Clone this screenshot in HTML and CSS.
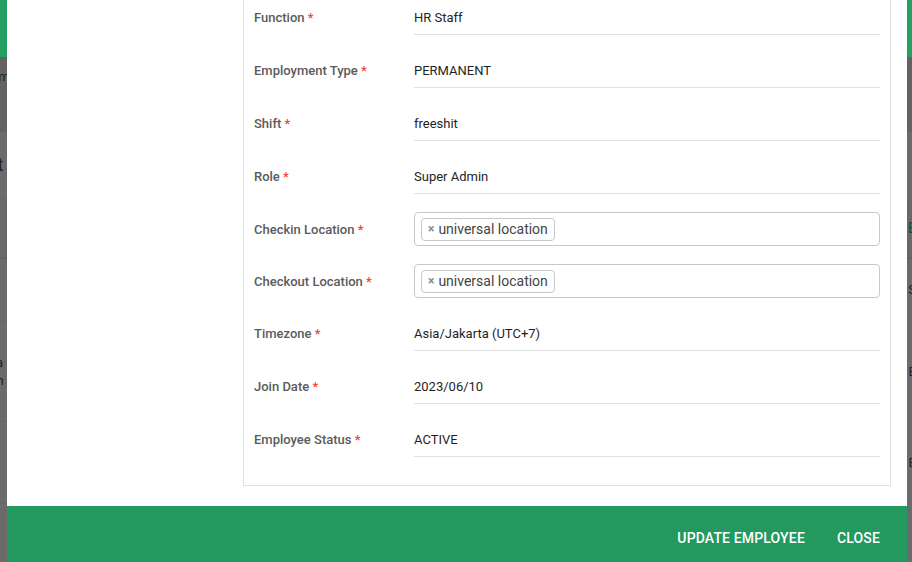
FILE: index.html
```html
<!DOCTYPE html>
<html lang="en">
<head>
<meta charset="utf-8">
<title>Edit Employee</title>
<link rel="stylesheet" href="styles.css">
</head>
<body>
<div class="page">
  <div class="page-header"></div>
  <div class="page-band">
    <div class="bg-row bg-row-a"><span class="bg-left">Nam</span></div>
    <div class="bg-row bg-row-b"></div>
  </div>
  <div class="bg-title"><span class="bg-left big">Dat</span></div>
  <div class="bg-table">
    <div class="bg-row bg-head"><span class="bg-right green">E</span></div>
    <div class="bg-row bg-tr"><span class="bg-left">NA</span><span class="bg-right">S</span></div>
    <div class="bg-row bg-tr2"><span class="bg-left two">Ra<br>An</span><span class="bg-right">E</span></div>
    <div class="bg-row bg-tr3"><span class="bg-left">Te</span><span class="bg-right">E</span></div>
  </div>

  <div class="modal">
    <div class="modal-body">
      <div class="card">
        <div class="field">
          <div class="label">Function <span class="req">*</span></div>
          <div class="value line">HR Staff</div>
        </div>
        <div class="field">
          <div class="label">Employment Type <span class="req">*</span></div>
          <div class="value line">PERMANENT</div>
        </div>
        <div class="field">
          <div class="label">Shift <span class="req">*</span></div>
          <div class="value line">freeshit</div>
        </div>
        <div class="field">
          <div class="label">Role <span class="req">*</span></div>
          <div class="value line">Super Admin</div>
        </div>
        <div class="field field-box">
          <div class="label">Checkin Location <span class="req">*</span></div>
          <div class="value box"><span class="tag"><span class="tag-x">×</span>universal location</span></div>
        </div>
        <div class="field field-box">
          <div class="label">Checkout Location <span class="req">*</span></div>
          <div class="value box"><span class="tag"><span class="tag-x">×</span>universal location</span></div>
        </div>
        <div class="field">
          <div class="label">Timezone <span class="req">*</span></div>
          <div class="value line">Asia/Jakarta (UTC+7)</div>
        </div>
        <div class="field">
          <div class="label">Join Date <span class="req">*</span></div>
          <div class="value line">2023/06/10</div>
        </div>
        <div class="field">
          <div class="label">Employee Status <span class="req">*</span></div>
          <div class="value line">ACTIVE</div>
        </div>
      </div>
    </div>
    <div class="modal-footer">
      <button class="btn">UPDATE EMPLOYEE</button>
      <button class="btn">CLOSE</button>
    </div>
  </div>
</div>
</body>
</html>
```

FILE: styles.css
```css
* { box-sizing: border-box; }
html, body { margin: 0; padding: 0; }
body {
  font-family: Roboto, "Liberation Sans", Arial, sans-serif;
  background: #6b6b6b;
}
.page {
  position: relative;
  width: 912px;
  height: 562px;
  overflow: hidden;
  background: #6b6b6b;
}
.page-header {
  height: 57px;
  background: #24a062;
}
.page-band {
  background: #626262;
}
.bg-row {
  position: relative;
  display: flex;
  align-items: center;
  border-bottom: 1px solid #666;
}
.bg-row-a { height: 40px; }
.bg-row-b { height: 35px; border-bottom: none; }
.bg-title { height: 66px; display: flex; align-items: center; }
.bg-left, .bg-right {
  font-size: 13px;
  color: #222;
  line-height: 18px;
}
.bg-left { margin-left: -18px; }
.bg-right { margin-left: auto; margin-right: -4px; }
.bg-left.big { font-size: 18px; margin-left: -24px; }
.bg-left.two { margin-left: -12px; }
.green { color: #10502f; font-size: 14px; }
.bg-head { height: 61px; background: #686868; border-bottom: 1px solid #5f5f5f; }
.bg-tr { height: 63px; }
.bg-tr2 { height: 100px; }
.bg-tr3 { height: 82px; }

.modal {
  position: absolute;
  left: 7px;
  top: 0;
  width: 900px;
  height: 562px;
  background: #fff;
  display: flex;
  flex-direction: column;
  overflow: hidden;
}
.modal-body {
  height: 486px;
  flex: none;
  padding: 0 16px 0 236px;
  overflow: hidden;
}
.card {
  margin-top: -20px;
  border: 1px solid #e0e0e0;
  padding: 19px 10px 28px 10px;
  display: flex;
  flex-direction: column;
  gap: 18px;
}
.field {
  display: grid;
  grid-template-columns: 160px 1fr;
  align-items: center;
  height: 35px;
}
.field-box { height: 34px; }
.label {
  font-size: 13px;
  font-weight: 500;
  color: #5b5b5b;
  padding-bottom: 1px;
}
.field-box .label { padding-bottom: 0; }
.req { color: #f44336; }
.value {
  font-size: 13px;
  color: #1f1f1f;
  height: 100%;
  display: flex;
  align-items: center;
}
.line {
  border-bottom: 1px solid #e0e0e0;
}
.box {
  border: 1px solid #c8c8c8;
  border-radius: 4px;
  padding: 0 6px;
}
.tag {
  display: inline-flex;
  align-items: center;
  height: 23px;
  border: 1px solid #c8c8c8;
  border-radius: 4px;
  padding: 0 6px 0 6px;
  font-size: 14px;
  color: #444;
  background: #fff;
}
.tag-x {
  color: #888;
  font-weight: 700;
  font-size: 12px;
  margin-right: 4px;
}
.modal-footer {
  height: 56px;
  margin-top: 20px;
  background: #24995f;
  display: flex;
  justify-content: flex-end;
  align-items: center;
  padding: 8px 27px 0 0;
  gap: 32px;
}
.btn {
  background: none;
  border: none;
  padding: 0;
  color: #fff;
  font-family: Roboto, "Liberation Sans", Arial, sans-serif;
  font-size: 14px;
  font-weight: 500;
  letter-spacing: 0.15px;
  cursor: pointer;
}
```
